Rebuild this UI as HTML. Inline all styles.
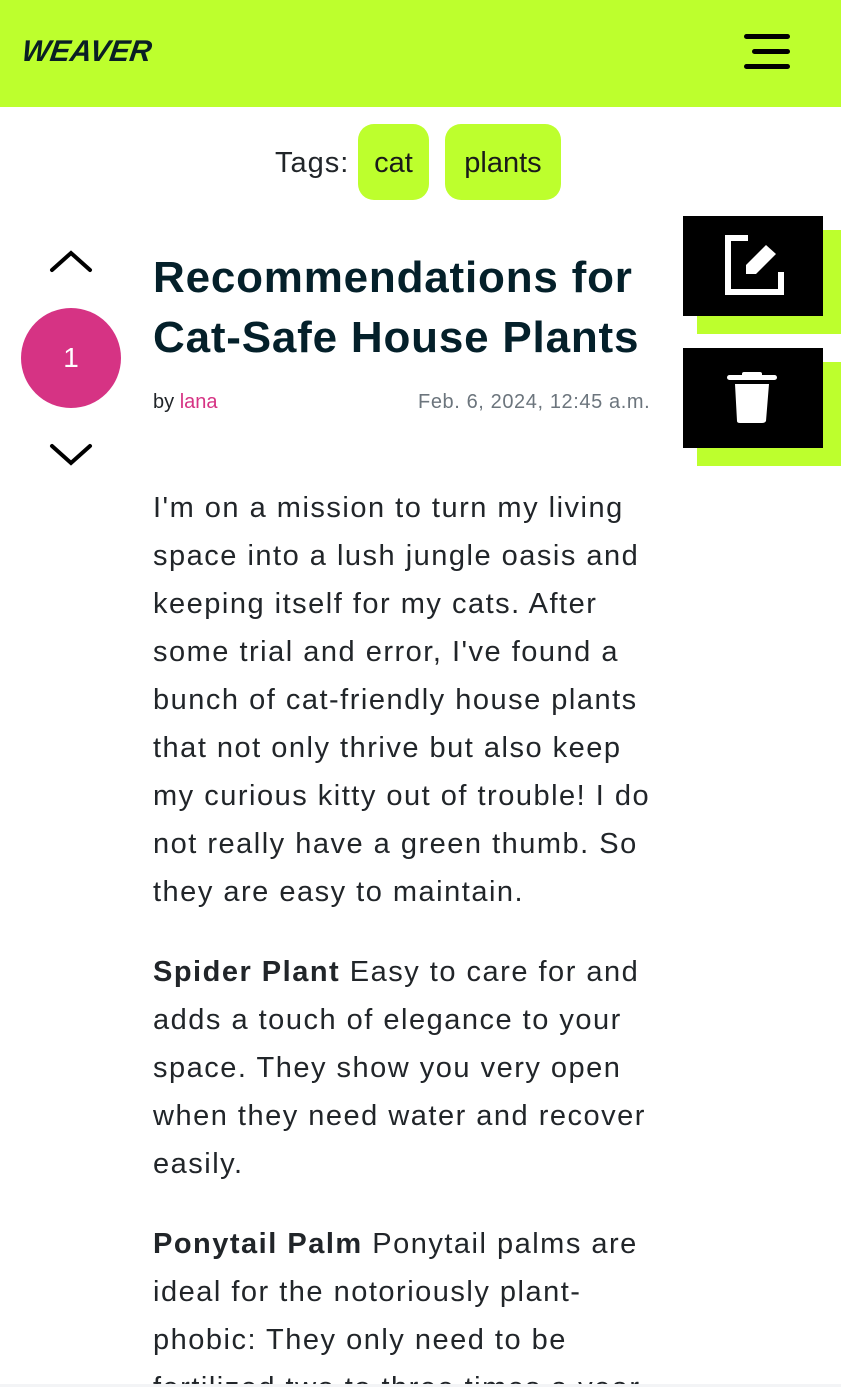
<!DOCTYPE html>
<html><head><meta charset="utf-8"><style>
*{margin:0;padding:0;box-sizing:border-box}
html,body{width:841px;height:1387px;overflow:hidden}
body{background:#fff;font-family:"Liberation Sans",sans-serif;color:#212529;position:relative}
.hdr{position:absolute;left:0;top:0;width:841px;height:107px;background:#bdff2d}
.logo{position:absolute;left:22px;top:35px;font:italic 900 30px "Liberation Sans",sans-serif;color:#0a1f24;letter-spacing:0px;transform:skewX(-8deg)}
.burger div{position:absolute;left:744px;width:46px;height:5px;border-radius:3px;background:#000}
.tags{position:absolute;top:124px;left:0;width:841px;height:76px}
.tag{position:absolute;top:0;height:76px;background:#bdff2d;border-radius:16px;font-size:29px;line-height:78px;text-align:center;color:#1a1a1a}
.abs{position:absolute}
.title{position:absolute;left:153px;top:248px;font-weight:bold;font-size:44px;line-height:60px;color:#04202a;letter-spacing:0.8px}
.p{position:absolute;left:153px;font-size:29px;line-height:48px;white-space:nowrap;letter-spacing:1.5px}
.box{position:absolute;left:683px;width:140px;height:100px;background:#000}
.sh{position:absolute;left:697px;width:144px;height:104px;background:#bdff2d}
</style></head><body>
<div class="hdr">
<div class="logo">WEAVER</div>
<div class="burger"><div style="top:34px"></div><div style="top:49px;left:752px;width:38px"></div><div style="top:64px"></div></div>
</div>
<div class="tags">
<div class="abs" style="left:275px;top:0;font-size:29px;line-height:78px;letter-spacing:1px">Tags:</div>
<div class="tag" style="left:358px;width:71px">cat</div>
<div class="tag" style="left:445px;width:116px">plants</div>
</div>

<div class="sh" style="top:230px"></div>
<div class="box" style="top:216px">
<svg width="140" height="100" viewBox="0 0 140 100"><path d="M65 22H45V76H98V56" fill="none" stroke="#fff" stroke-width="6"/><path d="M63 49L83 29L93 38L73 58H63Z" fill="#fff"/></svg>
</div>
<div class="sh" style="top:362px"></div>
<div class="box" style="top:348px">
<svg width="140" height="100" viewBox="0 0 140 100"><rect x="44" y="27" width="50" height="5" rx="2.5" fill="#fff"/><rect x="59" y="24" width="20" height="5" rx="2" fill="#fff"/><path d="M52 36H86L83 73Q82 75 79 75H57Q54 75 54 73Z" fill="#fff"/></svg>
</div>

<svg class="abs" style="left:48px;top:248px" width="46" height="26"><path d="M4 22L23 5L42 22" fill="none" stroke="#000" stroke-width="4" stroke-linecap="round"/></svg>
<div class="abs" style="left:21px;top:308px;width:100px;height:100px;border-radius:50%;background:#d63384;color:#fff;font-size:28px;line-height:100px;text-align:center">1</div>
<svg class="abs" style="left:48px;top:442px" width="46" height="26"><path d="M4 4L23 21L42 4" fill="none" stroke="#000" stroke-width="4" stroke-linecap="round"/></svg>

<div class="title">Recommendations for<br>Cat-Safe House Plants</div>
<div class="abs" style="left:153px;top:391px;font-size:20px">by <span style="color:#d63384">lana</span></div>
<div class="abs" style="left:418px;top:391px;font-size:20px;color:#6c757d;letter-spacing:0.6px">Feb. 6, 2024, 12:45 a.m.</div>

<div class="p" style="top:484px">I'm on a mission to turn my living<br>space into a lush jungle oasis and<br>keeping itself for my cats. After<br>some trial and error, I've found a<br>bunch of cat-friendly house plants<br>that not only thrive but also keep<br>my curious kitty out of trouble! I do<br>not really have a green thumb. So<br>they are easy to maintain.</div>
<div class="p" style="top:948px"><b>Spider Plant</b> Easy to care for and<br>adds a touch of elegance to your<br>space. They show you very open<br>when they need water and recover<br>easily.</div>
<div class="p" style="top:1220px"><b>Ponytail Palm</b> Ponytail palms are<br>ideal for the notoriously plant-<br>phobic: They only need to be<br>fertilized two to three times a year.</div>
<div class="abs" style="left:0;top:1384px;width:841px;height:3px;background:#f3f4f6"></div>
</body></html>
